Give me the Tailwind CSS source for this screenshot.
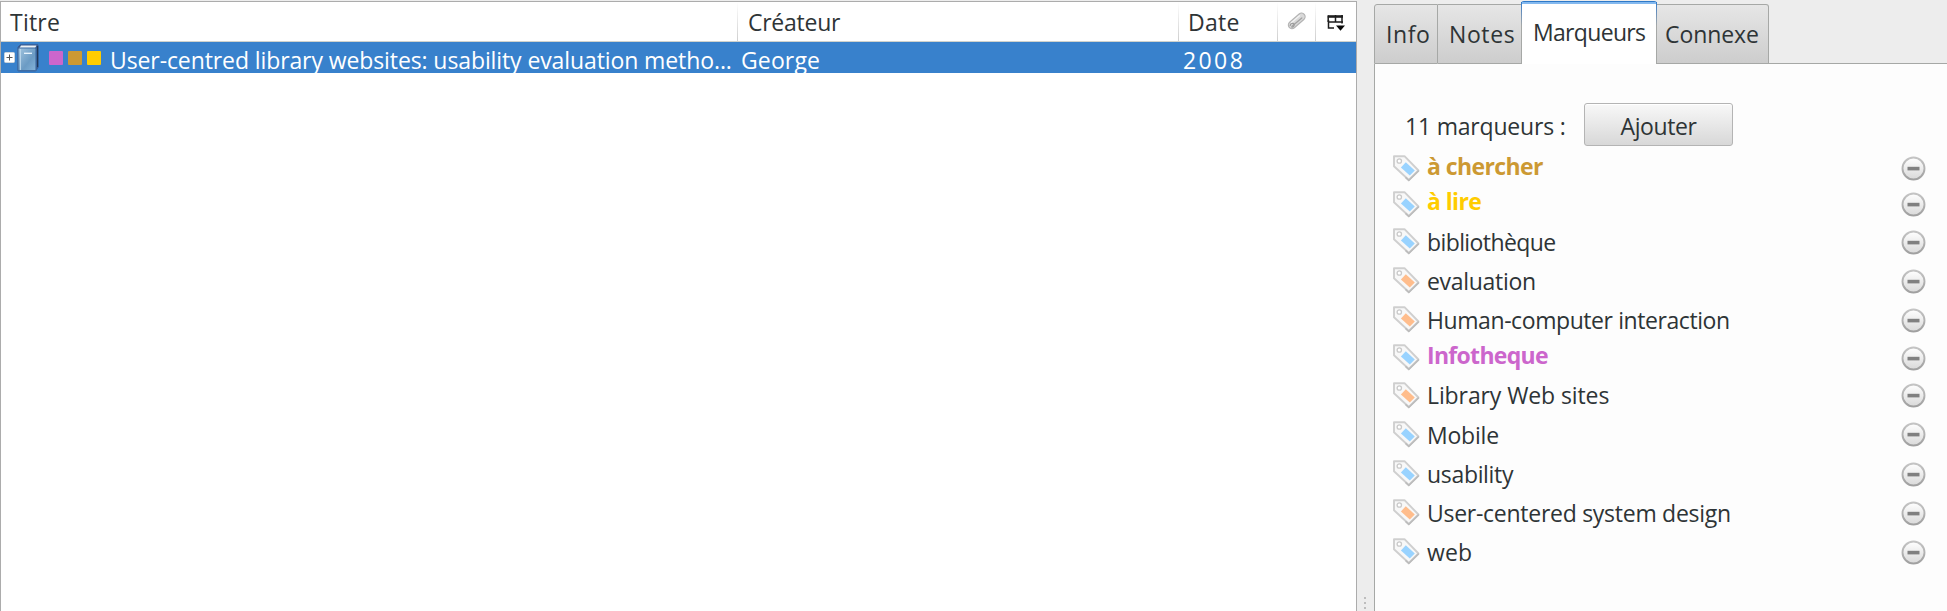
<!DOCTYPE html>
<html lang="fr">
<head>
<meta charset="utf-8">
<title>Marqueurs</title>
<script src="https://cdn.jsdelivr.net/npm/@tailwindcss/browser@4"></script>
</head>
<body class="h-[611px] w-[1947px] overflow-hidden bg-[#ededed] font-['Open_Sans','Noto_Sans',sans-serif] text-[23px] leading-[26px] whitespace-nowrap text-[#2e3436]">
<svg class="absolute size-0">
  <defs>
    <linearGradient id="book" x1="0" y1="0" x2="1" y2="1"><stop offset="0" stop-color="#a3c5df"/><stop offset=".6" stop-color="#6b9bc4"/><stop offset="1" stop-color="#85b4da"/></linearGradient>
    <linearGradient id="knob" x1="0" y1="0" x2="0" y2="1"><stop offset="0" stop-color="#ffffff"/><stop offset="1" stop-color="#d9d9d9"/></linearGradient>
    <linearGradient id="rim" x1="0" y1="0" x2="0" y2="1"><stop offset="0" stop-color="#c4c4c4"/><stop offset="1" stop-color="#a0a0a0"/></linearGradient>
  </defs>
  <symbol id="tag" viewBox="0 0 27 27">
    <path d="M1 1.2H11.5L25.5 15.5L15.8 25L1 11.2Z" fill="#f8f8f8" stroke="#cfcfcf" stroke-width="1.9" stroke-linejoin="round"/>
    <path d="M25.8 15.6L15.8 25.4L12.5 22.4" fill="none" stroke="#bcbcbc" stroke-width="1.5"/>
    <circle cx="6.3" cy="6" r="2.2" fill="#fff" stroke="#c9c9c9" stroke-width="1.3"/>
    <path d="M12.8 7.2L21.8 15.4L16.8 20.6L7.9 12.4Z" fill="currentColor"/>
  </symbol>
  <symbol id="minus" viewBox="0 0 25 25">
    <circle cx="12.5" cy="12.5" r="11" fill="url(#knob)" stroke="url(#rim)" stroke-width="1.9"/>
    <rect x="6.5" y="10.8" width="12" height="3.6" fill="#808080"/>
  </symbol>
</svg>
<div class="flex h-full">
  <main class="mt-px flex w-[1357px] flex-col border border-b-0 border-[#acacac] bg-white">
    <div class="flex h-10 border-b border-[#d0d2cc]">
      <div class="relative w-[737px] pt-[7px] pl-[9px] tracking-[0.23px]">Titre<i class="absolute top-0 right-0 h-full w-px bg-linear-to-b from-white to-[#cfcfcf]"></i></div>
      <div class="relative w-[441px] pt-[7px] pl-[10px] tracking-[-0.26px]">Créateur<i class="absolute top-0 right-0 h-full w-px bg-linear-to-b from-white to-[#cfcfcf]"></i></div>
      <div class="relative w-[99px] pt-[7px] pl-[9px] tracking-[0.3px]">Date<i class="absolute top-0 right-0 h-full w-px bg-linear-to-b from-white to-[#cfcfcf]"></i></div>
      <div class="relative w-[38px] pt-[9px] pl-[9px]">
        <svg class="size-5" viewBox="0 0 20 20" fill="none" stroke-linecap="round" stroke-linejoin="round">
          <path d="M5 14L14.5 5.8" stroke="#b4b4b4" stroke-width="8.4"/>
          <path d="M5 14L14.5 5.8" stroke="#d9d9d9" stroke-width="6"/>
          <path d="M4.5 11.5L12.5 4.8" stroke="#f2f2f2" stroke-width="1.3"/>
          <path d="M5 15.2L14.8 7" stroke="#a3a3a3" stroke-width="1.3"/>
          <path d="M3.2 14.5C3.2 12.5 6 11.5 7 13.2C7.8 15 5.8 16.4 4.6 16" stroke="#9c9c9c" stroke-width="1.2"/>
        </svg>
        <i class="absolute top-0 right-0 h-full w-px bg-linear-to-b from-white to-[#cfcfcf]"></i>
      </div>
      <div class="flex-1 pt-[13px] pl-[11px]">
        <svg class="h-[17px] w-[19px]" viewBox="0 0 19 17">
          <path d="M1.5 5V13H7M8.5 0V7M15 0V8.5M1 7H16" fill="none" stroke="#1d1d1d" stroke-width="1.5"/>
          <path d="M.8 1.5H16" stroke="#1d1d1d" stroke-width="2.6"/>
          <path d="M1.2 .5V7" stroke="#1d1d1d" stroke-width="1.5"/>
          <path d="M9 10.5H18L13.5 15.8Z" fill="#080808"/>
        </svg>
      </div>
    </div>
    <div class="flex h-[31px] bg-[#3881cc] text-white">
      <svg class="mt-[10px] ml-[3px] size-[11px] shrink-0" viewBox="0 0 11 11"><rect x=".5" y=".5" width="10" height="10" rx="1" fill="#fff" stroke="#ccd5dd"/><path d="M2.5 5.5H8.5M5.5 2.5V8.5" stroke="#555"/></svg>
      <svg class="mt-[2px] ml-[2px] h-7 w-[22px] shrink-0" viewBox="0 0 22 28">
        <path d="M3.2 .8H21V23.5L18.8 26.8H1V3Z" fill="#34588f" stroke="#3a5d94" stroke-linejoin="round"/>
        <path d="M4 1.5H19.5L18 4H2.5Z" fill="#edf2f6"/>
        <rect x="1" y="4" width="18" height="22.7" rx="1" fill="url(#book)" stroke="#3f6ca3" stroke-width="1.2"/>
        <path d="M3.5 5V26" stroke="#b8d4e9"/><path d="M7 9.3H15" stroke="#edf7ff" stroke-width="1.3"/>
        <path d="M20.6 2V23" stroke="#203858" stroke-width="1.2"/>
      </svg>
      <div class="ml-[10px] flex shrink-0 gap-[5px] pt-[9px]">
        <span class="size-[14px] rounded-[1px] bg-[#cc66cc]"></span>
        <span class="size-[14px] rounded-[1px] bg-[#cc9933]"></span>
        <span class="size-[14px] rounded-[1px] bg-[#ffcc00]"></span>
      </div>
      <div class="w-[640px] shrink-0 pt-[5px] pl-[9px] tracking-[-0.1px]">User-centred library websites: usability evaluation metho...</div>
      <div class="w-[442px] shrink-0 pt-[5px] tracking-[0.13px]">George</div>
      <div class="pt-[5px] tracking-[2.4px]">2008</div>
    </div>
  </main>

  <div class="flex w-[17px] flex-col items-center justify-end gap-[3px] pr-px pb-[2px]">
    <i class="size-[2px] bg-[#bdbdbd]"></i><i class="size-[2px] bg-[#bdbdbd]"></i><i class="size-[2px] bg-[#bdbdbd]"></i>
  </div>

  <aside class="flex flex-1 flex-col">
    <div class="flex h-[64px] items-end">
      <div class="h-[60px] w-[64px] rounded-tl-[3px] border border-[#a6a8a6] bg-linear-to-b from-[#e6e6e6] to-[#cdcdcd] pt-4 pl-[11px] tracking-[0.58px]">Info</div>
      <div class="h-[60px] w-[83px] border-y border-[#a6a8a6] bg-linear-to-b from-[#e6e6e6] to-[#cdcdcd] pt-4 pl-[11px] tracking-[0.6px]">Notes</div>
      <div class="relative h-[63px] w-[136px] rounded-t-[3px] border-x border-t border-x-[#a6a8a6] border-t-[#2f79c8] bg-white pt-[17px] pl-[11px] tracking-[-0.68px]">Marqueurs<i class="absolute inset-x-0 top-0 h-[2px] bg-[#84b9ef]"></i><i class="absolute top-0 -left-px h-6 w-px bg-linear-to-b from-[#2f79c8] to-[#a6a8a6]"></i><i class="absolute top-0 -right-px h-6 w-px bg-linear-to-b from-[#2f79c8] to-[#a6a8a6]"></i></div>
      <div class="h-[60px] w-[112px] rounded-tr-[3px] border border-l-0 border-[#a6a8a6] bg-linear-to-b from-[#e6e6e6] to-[#cdcdcd] pt-4 pl-[8px] tracking-[-0.08px]">Connexe</div>
      <div class="h-px flex-1 bg-[#a6a8a6]"></div>
    </div>
    <div class="flex-1 border-l border-[#a6a8a6] bg-[#fdfdfd] pl-[18px]">
      <div class="flex h-[91px] pt-[39px]">
        <div class="w-[191px] pt-[10px] pl-[12px] tracking-[-0.2px]">11 marqueurs :</div>
        <button class="h-[43px] w-[149px] rounded-[3px] border border-[#b4b4b4] bg-linear-to-b from-[#f8f8f8] to-[#d8d8d8] pt-[2px] tracking-[-0.4px] inset-shadow-[0_1px_0_#ffffff]">Ajouter</button>
      </div>
      <ul>
        <li class="flex h-9"><svg class="size-[27px] text-[#99d3ff]"><use href="#tag"/></svg><span class="-mt-[2px] flex-1 pl-[7px] font-bold tracking-[-0.6px] text-[#cc9933]">à chercher</span><svg class="mt-px mr-[21px] size-[25px]"><use href="#minus"/></svg></li>
        <li class="flex h-[37px]"><svg class="size-[27px] text-[#99d3ff]"><use href="#tag"/></svg><span class="-mt-[3px] flex-1 pl-[7px] font-bold tracking-[-0.6px] text-[#ffcc00]">à lire</span><svg class="mt-px mr-[21px] size-[25px]"><use href="#minus"/></svg></li>
        <li class="flex h-[39px]"><svg class="size-[27px] text-[#99d3ff]"><use href="#tag"/></svg><span class="flex-1 pt-px pl-[7px] tracking-[-0.6px]">bibliothèque</span><svg class="mt-[2px] mr-[21px] size-[25px]"><use href="#minus"/></svg></li>
        <li class="flex h-[39px]"><svg class="size-[27px] text-[#ffbd8c]"><use href="#tag"/></svg><span class="flex-1 pt-px pl-[7px] tracking-[-0.3px]">evaluation</span><svg class="mt-[2px] mr-[21px] size-[25px]"><use href="#minus"/></svg></li>
        <li class="flex h-[38px]"><svg class="size-[27px] text-[#ffbd8c]"><use href="#tag"/></svg><span class="flex-1 pt-px pl-[7px] tracking-[-0.42px]">Human-computer interaction</span><svg class="mt-[2px] mr-[21px] size-[25px]"><use href="#minus"/></svg></li>
        <li class="flex h-[38px]"><svg class="size-[27px] text-[#99d3ff]"><use href="#tag"/></svg><span class="-mt-[2px] flex-1 pl-[7px] font-bold tracking-[-0.69px] text-[#cc66cc]">Infotheque</span><svg class="mt-[2px] mr-[21px] size-[25px]"><use href="#minus"/></svg></li>
        <li class="flex h-[39px]"><svg class="size-[27px] text-[#ffbd8c]"><use href="#tag"/></svg><span class="flex-1 pl-[7px] tracking-[-0.1px]">Library Web sites</span><svg class="mt-px mr-[21px] size-[25px]"><use href="#minus"/></svg></li>
        <li class="flex h-[39px]"><svg class="size-[27px] text-[#99d3ff]"><use href="#tag"/></svg><span class="flex-1 pt-px pl-[7px] tracking-[-0.2px]">Mobile</span><svg class="mt-px mr-[21px] size-[25px]"><use href="#minus"/></svg></li>
        <li class="flex h-[39px]"><svg class="size-[27px] text-[#99d3ff]"><use href="#tag"/></svg><span class="flex-1 pt-px pl-[7px] tracking-[-0.32px]">usability</span><svg class="mt-[2px] mr-[21px] size-[25px]"><use href="#minus"/></svg></li>
        <li class="flex h-[39px]"><svg class="size-[27px] text-[#ffbd8c]"><use href="#tag"/></svg><span class="flex-1 pt-px pl-[7px] tracking-[-0.27px]">User-centered system design</span><svg class="mt-[2px] mr-[21px] size-[25px]"><use href="#minus"/></svg></li>
        <li class="flex h-[39px]"><svg class="size-[27px] text-[#99d3ff]"><use href="#tag"/></svg><span class="flex-1 pt-px pl-[7px] tracking-[0.1px]">web</span><svg class="mt-[2px] mr-[21px] size-[25px]"><use href="#minus"/></svg></li>
      </ul>
    </div>
  </aside>
</div>
</body>
</html>
